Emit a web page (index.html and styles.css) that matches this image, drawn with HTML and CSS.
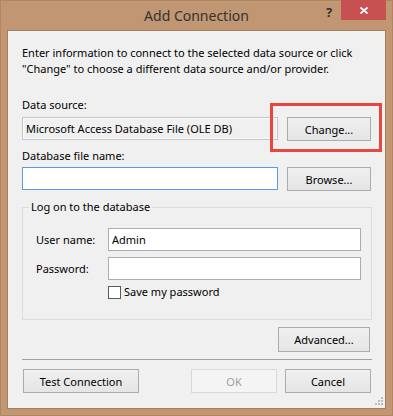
FILE: index.html
```html
<!DOCTYPE html>
<html>
<head>
<meta charset="utf-8">
<link rel="stylesheet" href="styles.css">
</head>
<body>
<div class="window">
  <div class="titlebar">
    <div></div>
    <div class="title">Add Connection</div>
    <div class="caption-btns">
      <span class="help">?</span>
      <span class="close"><svg width="8" height="7" viewBox="0 0 8 7"><path d="M0.5 0.5 L7.5 6.5 M7.5 0.5 L0.5 6.5" stroke="#fff" stroke-width="1.8"/></svg></span>
    </div>
  </div>
  <div class="client">
    <p class="intro">Enter information to connect to the selected data source or click<br>"Change" to choose a different data source and/or provider.</p>
    <div class="label ds-label">Data source:</div>
    <div class="row row-ds">
      <div class="textbox readonly">Microsoft Access Database File (OLE DB)</div>
      <div class="btn-wrap">
        <button class="btn w84">Change...</button>
        <span class="highlight"></span>
      </div>
    </div>
    <div class="label file-label">Database file name:</div>
    <div class="row row-file">
      <div class="textbox focused"></div>
      <button class="btn w84">Browse...</button>
    </div>
    <fieldset class="group">
      <legend>Log on to the database</legend>
      <div class="field">
        <span class="field-label">User name:</span>
        <div class="textbox wide">Admin</div>
      </div>
      <div class="field field-pw">
        <span class="field-label">Password:</span>
        <div class="textbox wide"></div>
      </div>
      <div class="check-row">
        <span class="checkbox"></span>
        <span class="check-label">Save my password</span>
      </div>
    </fieldset>
    <div class="adv-row">
      <button class="btn w92 tall">Advanced...</button>
    </div>
    <div class="separator"></div>
    <div class="bottom-row">
      <button class="btn w116">Test Connection</button>
      <button class="btn w86 disabled push">OK</button>
      <button class="btn w86">Cancel</button>
    </div>
    <svg class="grip" width="8" height="8" viewBox="0 0 8 8">
      <rect x="6" y="0" width="2" height="2" fill="#bcbcbc"/>
      <rect x="3" y="3" width="2" height="2" fill="#bcbcbc"/>
      <rect x="6" y="3" width="2" height="2" fill="#bcbcbc"/>
      <rect x="0" y="6" width="2" height="2" fill="#bcbcbc"/>
      <rect x="3" y="6" width="2" height="2" fill="#bcbcbc"/>
      <rect x="6" y="6" width="2" height="2" fill="#bcbcbc"/>
    </svg>
  </div>
</div>
</body>
</html>
```

FILE: styles.css
```css
html, body {
  margin: 0;
  padding: 0;
  background: #c19672;
}
.window {
  width: 393px;
  height: 416px;
  box-sizing: border-box;
  background: #c19672;
  border: 1px solid #b08562;
  font-family: "Noto Sans", "DejaVu Sans", sans-serif;
  font-size: 11px;
  color: #000;
  position: relative;
}
.titlebar {
  height: 29px;
  display: grid;
  grid-template-columns: 1fr auto 1fr;
}
.title {
  font-size: 14px;
  color: #333;
  line-height: 20px;
  padding-top: 5px;
}
.caption-btns {
  justify-self: end;
  display: flex;
  align-items: flex-start;
  margin-right: 6px;
  margin-top: -1px;
}
.help {
  width: 24px;
  text-align: center;
  font-weight: bold;
  font-size: 13px;
  color: #333;
  line-height: 18px;
  padding-top: 3px;
}
.close {
  width: 45px;
  height: 20px;
  background: #c75050;
  display: flex;
  align-items: center;
  justify-content: center;
}
.client {
  position: relative;
  margin: 0 6px;
  height: 379px;
  box-sizing: border-box;
  border: 1px solid #a47e5e;
  background: #f0f0f0;
  padding: 0 14px;
}
.intro {
  margin: 14px 0 0 0;
  line-height: 16px;
  white-space: nowrap;
}
.label {
  line-height: 16px;
}
.ds-label { margin-top: 20px; }
.file-label { margin-top: 7px; }
.row {
  display: flex;
  align-items: flex-start;
  gap: 9px;
}
.row-ds { margin-top: 4px; }
.row-file { margin-top: 3px; }
.textbox {
  box-sizing: border-box;
  width: 256px;
  height: 23px;
  border: 1px solid #abadb3;
  background: #fff;
  line-height: 21px;
  padding: 0 3px;
  white-space: nowrap;
  overflow: hidden;
}
.textbox.readonly {
  background: #f0f0f0;
  border-color: #c6c6c6;
  box-shadow: inset 0 0 0 1px #fafafa;
}
.textbox.focused {
  border-color: #569de5;
}
.btn-wrap {
  position: relative;
}
.highlight {
  position: absolute;
  left: -17px;
  top: -14px;
  width: 112px;
  height: 49px;
  box-sizing: border-box;
  border: 3px solid #e8473f;
}
.btn {
  display: block;
  box-sizing: border-box;
  height: 24px;
  border: 1px solid #acacac;
  background: linear-gradient(#f0f0f0, #e5e5e5);
  font-family: inherit;
  font-size: 11px;
  color: #000;
  padding: 0;
  margin: 0;
}
.btn.tall { height: 25px; }
.w84 { width: 84px; }
.w86 { width: 86px; }
.w92 { width: 92px; }
.w116 { width: 116px; }
.btn.disabled {
  color: #a0a0a0;
  border-color: #d9d9d9;
  background: #f4f4f4;
}
.group {
  margin: 8px 0 0 0;
  padding: 13px 10px 19px 13px;
  border: 1px solid #dcdcdc;
  min-width: 0;
  width: 350px;
  box-sizing: border-box;
}
.group legend {
  margin-left: -7px;
  padding: 0 2px;
  line-height: 16px;
}
.field {
  display: flex;
  align-items: center;
}
.field-pw { margin-top: 6px; }
.field-label {
  width: 72px;
}
.textbox.wide {
  width: 253px;
}
.check-row {
  margin-top: 4px;
  margin-left: 72px;
  height: 16px;
  display: flex;
  align-items: center;
}
.checkbox {
  width: 13px;
  height: 13px;
  box-sizing: border-box;
  border: 1px solid #5a5a5a;
  background: #fff;
  margin-right: 3px;
}
.check-label {
  line-height: 16px;
}
.adv-row {
  margin-top: 7px;
  display: flex;
  justify-content: flex-end;
  padding-right: 1px;
}
.separator {
  margin-top: 7px;
  height: 1px;
  background: #a0a0a0;
  width: 350px;
}
.bottom-row {
  margin-top: 9px;
  display: flex;
  gap: 8px;
}
.bottom-row .btn:first-child { margin-left: 1px; }
.push { margin-left: auto; }
.grip {
  position: absolute;
  right: 2px;
  bottom: 3px;
}
```
